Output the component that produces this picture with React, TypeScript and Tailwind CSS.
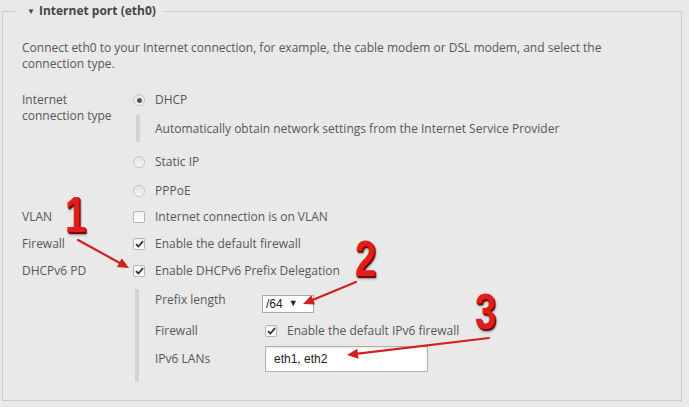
import React from 'react';

const font = { fontFamily: '"Open Sans", "Liberation Sans", sans-serif' };

const Radio = ({ checked }: { checked?: boolean }) => (
  <span className="w-[12px] h-[12px] rounded-full border border-[#c4c4c4] bg-gradient-to-b from-[#e2e2e2] to-[#f8f8f8] flex items-center justify-center shrink-0">
    {checked && <span className="w-[5px] h-[5px] rounded-full bg-[#555]" />}
  </span>
);

const Check = ({ checked }: { checked?: boolean }) => (
  <span className="w-[12px] h-[12px] rounded-[2px] border border-[#b5b5b5] bg-gradient-to-b from-[#f3f3f3] to-[#fdfdfd] flex items-center justify-center shrink-0">
    {checked && (
      <svg width="9" height="8" viewBox="0 0 9 8">
        <path d="M1 4.2 L3.4 6.5 L8 1.2" fill="none" stroke="#333" strokeWidth="1.8" />
      </svg>
    )}
  </span>
);

const Row = ({ label, children, className = '' }: { label?: string; children: React.ReactNode; className?: string }) => (
  <div className={`flex items-center h-[20px] ${className}`}>
    <div className="w-[111px] shrink-0">{label}</div>
    <div className="flex items-center gap-[10px]">{children}</div>
  </div>
);

const Num = ({ n, className }: { n: string; className: string }) => (
  <span
    className={`absolute text-[50px] font-bold leading-none text-[#e31c1c] scale-x-[0.76] origin-left ${className}`}
    style={{ fontFamily: '"Liberation Sans", sans-serif', textShadow: '1px 1px 0 #7a0606, 2px 2px 1px #5a0000, 2px 3px 3px rgba(0,0,0,0.35)' }}
  >
    {n}
  </span>
);

const Arrow = ({ x1, y1, x2, y2 }: { x1: number; y1: number; x2: number; y2: number }) => {
  const a = Math.atan2(y2 - y1, x2 - x1);
  const len = 11;
  const w = 5;
  const bx = x2 - len * Math.cos(a);
  const by = y2 - len * Math.sin(a);
  const px = -Math.sin(a) * w;
  const py = Math.cos(a) * w;
  return (
    <g>
      <line x1={x1} y1={y1} x2={bx} y2={by} stroke="#d31f1f" strokeWidth="2.2" strokeLinecap="round" />
      <polygon points={`${x2},${y2} ${bx + px},${by + py} ${bx - px},${by - py}`} fill="#d31f1f" />
    </g>
  );
};

export default function App() {
  return (
    <div className="relative w-[689px] h-[407px] bg-[#e9e9e9] overflow-hidden text-[12px] text-[#575757]" style={font}>
      <fieldset className="ml-[2px] mt-[2px] w-[680px] h-[399px] border border-[#cdcdcd] pl-[19px]">
        <legend className="-ml-[5px] pl-[10px] pr-[8px] text-[12px] font-bold text-[#454545] flex items-center gap-[4px]">
          <span className="text-[8px]">▼</span>
          <span>Internet port (eth0)</span>
        </legend>

        <p className="mt-[20px] leading-[16px] w-[600px]">
          Connect eth0 to your Internet connection, for example, the cable modem or DSL modem, and select the connection type.
        </p>

        <div className="mt-[20px] flex">
          <div className="w-[111px] shrink-0 leading-[16px]">
            Internet
            <br />
            connection type
          </div>
          <div>
            <div className="flex items-center gap-[10px] h-[20px] -mt-[2px]">
              <Radio checked />
              <span>DHCP</span>
            </div>
            <div className="mt-[5px] flex items-center h-[27px]">
              <div className="w-[4px] h-full bg-[#d3d3d3] ml-[3px]" />
              <span className="ml-[15px]">Automatically obtain network settings from the Internet Service Provider</span>
            </div>
            <div className="mt-[10px] flex items-center gap-[10px] h-[20px]">
              <Radio />
              <span>Static IP</span>
            </div>
            <div className="mt-[9px] flex items-center gap-[10px] h-[20px]">
              <Radio />
              <span>PPPoE</span>
            </div>
          </div>
        </div>

        <Row label="VLAN" className="mt-[6px]">
          <Check />
          <span>Internet connection is on VLAN</span>
        </Row>
        <Row label="Firewall" className="mt-[7px]">
          <Check checked />
          <span>Enable the default firewall</span>
        </Row>
        <Row label="DHCPv6 PD" className="mt-[7px]">
          <Check checked />
          <span>Enable DHCPv6 Prefix Delegation</span>
        </Row>

        <div className="mt-[8px] ml-[113px] flex">
          <div className="w-[4px] bg-[#d3d3d3]" />
          <div className="pl-[16px] pb-[10px]">
            <div className="flex h-[24px]">
              <div className="w-[107px] pt-[3px] leading-[16px]">Prefix length</div>
              <div className="mt-[6px] h-[18px] w-[52px] border border-[#a9a9a9] bg-white flex items-center pl-[3px] text-[#222]" style={{ fontFamily: '"Liberation Sans", sans-serif' }}>
                <span>/64</span>
                <span className="ml-[6px] text-[9px]">▼</span>
              </div>
            </div>
            <div className="mt-[8px] flex items-center h-[20px]">
              <div className="w-[110px]">Firewall</div>
              <Check checked />
              <span className="ml-[10px]">Enable the default IPv6 firewall</span>
            </div>
            <div className="mt-[5px] flex items-center h-[26px]">
              <div className="w-[110px]">IPv6 LANs</div>
              <div className="w-[163px] h-[26px] border border-[#b0b0b0] bg-white flex items-center pl-[8px] text-[#222] shadow-[inset_0_1px_2px_rgba(0,0,0,0.12)]" style={{ fontFamily: '"Liberation Sans", sans-serif' }}>
                eth1, eth2
              </div>
            </div>
          </div>
        </div>
      </fieldset>

      <svg className="absolute inset-0 pointer-events-none" width="689" height="407">
        <Arrow x1={78} y1={240} x2={129} y2={268} />
        <Arrow x1={356} y1={282} x2={303} y2={304} />
        <Arrow x1={489} y1={338} x2={347} y2={355} />
      </svg>
      <Num n="1" className="left-[65px] top-[190px]" />
      <Num n="2" className="left-[355px] top-[234px]" />
      <Num n="3" className="left-[475px] top-[287px]" />
    </div>
  );
}
